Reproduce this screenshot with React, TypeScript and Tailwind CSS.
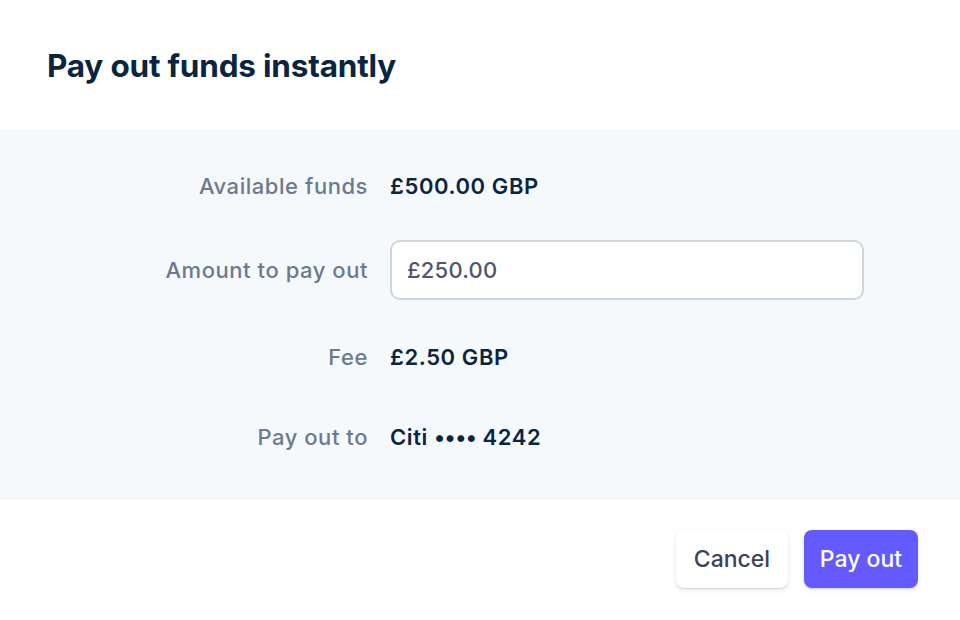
import React from 'react';

const label = 'flex items-center justify-end text-[22px] tracking-[0.55px] text-[#6b7a8f] font-medium';
const value = 'flex items-center text-[22px] tracking-[0.6px] text-[#0a2540] font-semibold';

export default function App() {
  return (
    <div className="w-[960px] h-[620px] bg-white flex flex-col" style={{ fontFamily: 'Inter, "Noto Sans", sans-serif' }}>
      <header className="h-[130px] flex items-center px-[47px]">
        <h1 className="text-[31.5px] font-bold text-[#0a2540] tracking-[-0.2px] leading-none mt-[2px]">Pay out funds instantly</h1>
      </header>

      <section className="h-[370px] bg-[#f6f9fc]">
        <div className="grid grid-cols-[368px_1fr] gap-x-[22px] items-center pt-[28px]">
          <div className={`h-[56px] ${label}`}>Available funds</div>
          <div className={`h-[56px] ${value}`}>£500.00 GBP</div>

          <div className={`mt-[26px] h-[60px] ${label}`}>Amount to pay out</div>
          <div className="mt-[26px] h-[60px]">
            <input
              readOnly
              value="£250.00"
              className="w-[474px] h-[60px] rounded-[10px] border-2 border-[#cfd5dd] bg-white px-[15px] text-[22px] font-medium tracking-[0.2px] text-[#4f566b] outline-none"
              style={{ fontFamily: 'Inter, "Noto Sans", sans-serif' }}
            />
          </div>

          <div className={`mt-[29px] h-[56px] ${label}`}>Fee</div>
          <div className={`mt-[29px] h-[56px] ${value}`}>£2.50 GBP</div>

          <div className={`mt-[24px] h-[56px] ${label}`}>Pay out to</div>
          <div className={`mt-[24px] h-[56px] ${value}`}>
            Citi&nbsp;<span className="tracking-[-0.5px]">••••</span>&nbsp;4242
          </div>
        </div>
      </section>

      <footer className="flex-1 flex justify-end items-start pt-[30px] pr-[42px] gap-[16px]">
        <button className="h-[58px] w-[112px] rounded-[8px] bg-white text-[23px] font-medium text-[#3c4257] shadow-[0_2px_5px_rgba(60,66,87,0.12),0_1px_1px_rgba(0,0,0,0.1)]">
          Cancel
        </button>
        <button className="h-[58px] w-[114px] rounded-[8px] bg-[#635bff] text-[23px] font-medium text-white shadow-[0_2px_5px_rgba(60,66,87,0.12),0_1px_1px_rgba(0,0,0,0.1)]">
          Pay out
        </button>
      </footer>
    </div>
  );
}
